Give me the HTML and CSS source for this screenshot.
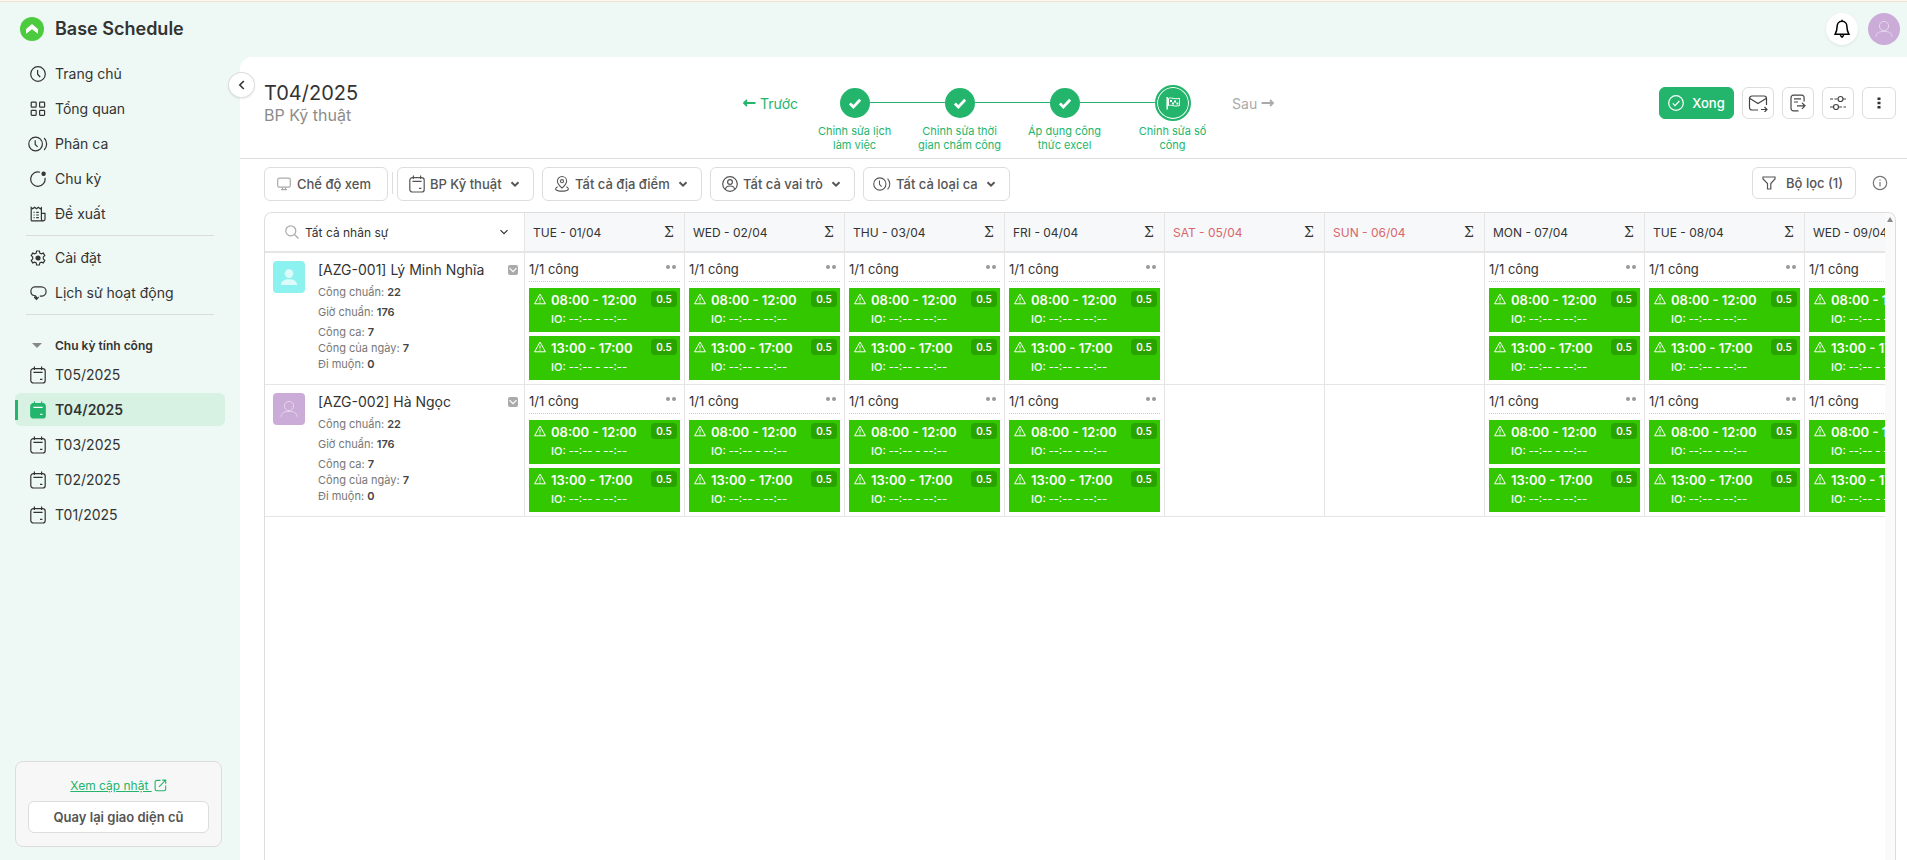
FILE: index.html
```
<!DOCTYPE html>
<html lang="vi">
<head>
    <meta charset="UTF-8">
    <meta name="viewport" content="width=device-width, initial-scale=1.0">
    <title>Base Schedule</title>
    <link rel="stylesheet" href="styles.css">
</head>
<body>
    <!-- Bộ icon dùng chung -->
    <svg class="sprite">
        <symbol id="i-clock" viewBox="0 0 16 16"><circle cx="8" cy="8" r="7.3"/><path d="M7.6 4v4.2l2.6 2.8"/></symbol>
        <symbol id="i-grid" viewBox="0 0 16 16"><rect x="1.2" y="1.2" width="5" height="5" rx=".8"/><rect x="9.6" y="1.2" width="5" height="5" rx=".8"/><rect x="1.2" y="9.4" width="5" height="5" rx=".8"/><rect x="9.6" y="9.4" width="5" height="5" rx=".8"/></symbol>
        <symbol id="i-shift" viewBox="0 0 20 16"><circle cx="7.6" cy="8" r="6.8"/><path d="M7.2 4.2v4.2l2.4 2.4M16.2 2a8.6 8.6 0 0 1 0 12"/></symbol>
        <symbol id="i-cycle" viewBox="0 0 16 16"><path d="M10 1.2A7.2 7.2 0 1 0 15 6.8"/><circle cx="13.6" cy="2.8" r="1.6" fill="currentColor"/></symbol>
        <symbol id="i-request" viewBox="0 0 16 16"><path d="M1.2 14.8V1.5l1.6 1.2 1.8-1.5 1.9 1.5 1.8-1.5 1.9 1.5 1.2-1V13a1.8 1.8 0 0 0 3.6 0V7.4h-3.4M1.2 14.8h11.9M3.6 6.4h1M6.2 6.4h2.6M3.6 9h1M6.2 9h2.6M3.6 11.6h1M6.2 11.6h2.6"/></symbol>
        <symbol id="i-gear" viewBox="0 0 16 16"><path d="M6.6 1h2.8l.4 2 1.5.9 2-.8 1.5 2.5-1.5 1.3v2.2l1.5 1.3-1.5 2.5-2-.8-1.5.9-.4 2H6.6l-.4-2-1.5-.9-2 .8-1.5-2.5 1.5-1.3V6.9L1.2 5.6l1.5-2.5 2 .8 1.5-.9z"/><circle cx="8" cy="8" r="2" fill="currentColor"/></symbol>
        <symbol id="i-history" viewBox="0 0 16 16"><path d="M9.8 11.2h1.6a4.7 4.7 0 0 0 0-9.4H4.8a4.3 4.3 0 0 0-3.9 4.6c0 2.4 1.5 3.8 3.6 4.3 1.4.2 2 .8 2 2.8M4.2 12l2.3 2.3L8.6 12"/></symbol>
        <symbol id="i-calendar" viewBox="0 0 16 18"><rect x=".8" y="2.6" width="14.4" height="14.4" rx="2.6"/><path d="M4.4.6v3.4M11.6.6v3.4M3.4 6.4h9.2M10 13.3h2.4"/></symbol>
        <symbol id="i-calendar-fill" viewBox="0 0 16 18"><rect x=".8" y="2.6" width="14.4" height="14.4" rx="2.6" fill="currentColor"/><path d="M4.4.6v3.4M11.6.6v3.4"/><path d="M3.4 6.4h9.2M10 13.3h2.4" stroke="#fff"/></symbol>
        <symbol id="i-external" viewBox="0 0 14 14"><path d="M7 1.5H3A1.8 1.8 0 0 0 1.2 3.3v7.6A1.8 1.8 0 0 0 3 12.7h7.8a1.8 1.8 0 0 0 1.8-1.8V7M5.4 8.5l7.1-7.2M8.8 1.2h3.8v3.9"/></symbol>
        <symbol id="i-user" viewBox="0 0 32 32"><circle cx="16" cy="13" r="4.6"/><path d="M8 23.6c.3-3.6 2.8-5.2 8-5.2s7.7 1.6 8 5.2"/></symbol>
        <symbol id="i-user-fill" viewBox="0 0 32 32"><circle cx="16" cy="12.6" r="4.3" fill="currentColor" stroke="none"/><path d="M8 24c0-4 3.2-5.8 8-5.8s8 1.8 8 5.8z" fill="currentColor" stroke="none"/></symbol>
        <symbol id="i-check" viewBox="0 0 12 12"><path d="M1.6 6.4l3 3 5.8-6.2"/></symbol>
        <symbol id="i-down" viewBox="0 0 10 10"><path d="M1.5 3.2L5 6.7l3.5-3.5"/></symbol>
        <symbol id="i-monitor" viewBox="0 0 14 14"><rect x=".7" y="1.2" width="12.6" height="9" rx="1.6"/><path d="M4 12.6h6M5.5 10.2v2.2M8.5 10.2v2.2"/></symbol>
        <symbol id="i-pin" viewBox="0 0 18 18"><path d="M9 13.6C5.8 10.6 3.8 8.4 3.8 5.8a5.2 5.2 0 0 1 10.4 0c0 2.6-2 4.8-5.2 7.8z"/><circle cx="9" cy="5.8" r="1.7"/><path d="M4.2 12.2c-4.2 1.8-3 4.8 4.8 4.8s9-3 4.8-4.8"/></symbol>
        <symbol id="i-role" viewBox="0 0 16 16"><circle cx="8" cy="8" r="7.3"/><circle cx="8" cy="6" r="2.4"/><path d="M3.4 13.4c.3-2.6 1.8-3.4 4.6-3.4s4.3.8 4.6 3.4"/></symbol>
        <symbol id="i-warn" viewBox="0 0 12 12"><path d="M6 1L11.4 10.8H.6zM6 4.4v3.2M6 8.6v1.1"/></symbol>
    </svg>

    <header class="topbar">
        <a class="brand" href="#">
            <svg class="logo" viewBox="0 0 24 24"><circle cx="12" cy="12" r="12" fill="#4ccb3f"/><path d="M12 7l5.6 4.8a1 1 0 0 1 .4.8v4.1l-4-2.9L12 12.3l-2 1.5-4 2.9v-4.1a1 1 0 0 1 .4-.8z" fill="#fff"/></svg>
            Base Schedule
        </a>
        <div class="account">
            <button class="bell" aria-label="Thông báo">
                <svg width="18" height="20" viewBox="0 0 18 20"><path d="M9 2.2c-3.4 0-4.9 2.6-4.9 5.4 0 4-1 5.8-2 7.7h13.8c-1-1.9-2-3.7-2-7.7 0-2.8-1.5-5.4-4.9-5.4zM7.2 16.2l1.8 2 1.8-2M9 .8v1.4"/></svg>
            </button>
            <svg class="avatar round"><use href="#i-user"/></svg>
        </div>
    </header>

    <div class="layout">
        <aside class="sidebar">
            <nav>
                <a class="item" href="#"><svg><use href="#i-clock"/></svg>Trang chủ</a>
                <a class="item" href="#"><svg><use href="#i-grid"/></svg>Tổng quan</a>
                <a class="item" href="#"><svg><use href="#i-shift"/></svg>Phân ca</a>
                <a class="item" href="#"><svg><use href="#i-cycle"/></svg>Chu kỳ</a>
                <a class="item" href="#"><svg><use href="#i-request"/></svg>Đề xuất</a>
                <hr>
                <a class="item" href="#"><svg><use href="#i-gear"/></svg>Cài đặt</a>
                <a class="item" href="#"><svg><use href="#i-history"/></svg>Lịch sử hoạt động</a>
                <hr>
                <button class="group"><span class="triangle"></span>Chu kỳ tính công</button>
                <a class="item" href="#"><svg><use href="#i-calendar"/></svg>T05/2025</a>
                <a class="item active" href="#"><svg><use href="#i-calendar-fill"/></svg>T04/2025</a>
                <a class="item" href="#"><svg><use href="#i-calendar"/></svg>T03/2025</a>
                <a class="item" href="#"><svg><use href="#i-calendar"/></svg>T02/2025</a>
                <a class="item" href="#"><svg><use href="#i-calendar"/></svg>T01/2025</a>
            </nav>
            <div class="update-box">
                <a href="#"><u>Xem cập nhật </u><svg width="13" height="13"><use href="#i-external"/></svg></a>
                <button>Quay lại giao diện cũ</button>
            </div>
        </aside>

        <main>
            <button class="collapse" aria-label="Thu gọn">
                <svg width="10" height="10" viewBox="0 0 10 10"><path d="M6.8 1L2.8 5l4 4"/></svg>
            </button>

            <div class="page-head">
                <div class="title">
                    <h1>T04/2025</h1>
                    <p>BP Kỹ thuật</p>
                </div>

                <div class="progress">
                    <button class="step-nav">
                        <svg width="14" height="10" viewBox="0 0 14 10"><path d="M13.5 5H2M5 2L2 5l3 3"/></svg>Trước
                    </button>
                    <ol class="steps">
                        <li><span class="dot"><svg><use href="#i-check"/></svg></span><span class="step-label">Chỉnh sửa lịch làm việc</span></li>
                        <li><span class="dot"><svg><use href="#i-check"/></svg></span><span class="step-label">Chỉnh sửa thời gian chấm công</span></li>
                        <li><span class="dot"><svg><use href="#i-check"/></svg></span><span class="step-label">Áp dụng công thức excel</span></li>
                        <li class="current"><span class="dot"><svg viewBox="0 0 14 14"><path d="M1.2 1v12.5" stroke-width="1.5"/><path d="M2.5 2.4c3-1.4 5 1.2 11 0v7.2c-6 1.4-8-1.2-11 0z"/><path d="M4 4h2v2H4zM8 4.6h2v2H8zM6 6.4h2v2H6zM10.4 6.4h2v2h-2z" fill="#fff" stroke="none"/></svg></span><span class="step-label">Chỉnh sửa số công</span></li>
                    </ol>
                    <button class="step-nav next" disabled>
                        Sau<svg width="14" height="10" viewBox="0 0 14 10"><path d="M.5 5H12M9 2l3 3-3 3"/></svg>
                    </button>
                </div>

                <div class="actions">
                    <button class="done">
                        <svg width="16" height="16" viewBox="0 0 16 16"><circle cx="8" cy="8" r="7.3"/><path d="M4.8 8.4l2.2 2.2 4.4-4.6"/></svg>Xong
                    </button>
                    <button class="icon-btn" aria-label="Gửi thư">
                        <svg width="20" height="18" viewBox="0 0 20 18"><path d="M10 16H4a2.5 2.5 0 0 1-2.5-2.5v-9A2.5 2.5 0 0 1 4 2h12a2.5 2.5 0 0 1 2.5 2.5V11M2 4.5l8 5 8-5M13 15.5h6M16.5 13l2.5 2.5-2.5 2.5"/></svg>
                    </button>
                    <button class="icon-btn" aria-label="Xuất dữ liệu">
                        <svg width="18" height="18" viewBox="0 0 18 18"><path d="M9.5 16.8H4.5A2.5 2.5 0 0 1 2 14.3V3.7a2.5 2.5 0 0 1 2.5-2.5h8.3a2.3 2.3 0 0 1 2.3 2.3V7.5M5 4.8h7M5 8h4M8 11.8h8M13 8.8l3 3-3 3"/></svg>
                    </button>
                    <button class="icon-btn" aria-label="Tùy chỉnh">
                        <svg width="18" height="18" viewBox="0 0 18 18"><path d="M1 5h3M5.5 5h3M14 5h3M1 13h3.5M10 13h3M14.5 13h2.5"/><circle cx="11.5" cy="5" r="2.5"/><circle cx="7" cy="13" r="2.5"/></svg>
                    </button>
                    <button class="icon-btn more" aria-label="Thêm">
                        <svg width="4" height="12" viewBox="0 0 4 12"><path d="M.5 .5h3v2.5h-3zM.5 4.7h3v2.5h-3zM.5 9h3v2.5h-3z" fill="#333" stroke="none"/></svg>
                    </button>
                </div>
            </div>

            <div class="toolbar">
                <button class="view-mode"><svg width="14" height="14"><use href="#i-monitor"/></svg>Chế độ xem</button>
                <span class="divider"></span>
                <label class="filter"><svg width="16" height="18"><use href="#i-calendar"/></svg>
                    <select aria-label="Bộ phận"><option>BP Kỹ thuật</option></select>
                    <svg class="arrow"><use href="#i-down"/></svg></label>
                <label class="filter"><svg width="16" height="18"><use href="#i-pin"/></svg>
                    <select aria-label="Địa điểm"><option>Tất cả địa điểm</option></select>
                    <svg class="arrow"><use href="#i-down"/></svg></label>
                <label class="filter"><svg width="16" height="16"><use href="#i-role"/></svg>
                    <select aria-label="Vai trò"><option>Tất cả vai trò</option></select>
                    <svg class="arrow"><use href="#i-down"/></svg></label>
                <label class="filter shift"><svg width="18" height="16"><use href="#i-shift"/></svg>
                    <select aria-label="Loại ca"><option>Tất cả loại ca</option></select>
                    <svg class="arrow"><use href="#i-down"/></svg></label>
                <button class="filter-count">
                    <svg width="14" height="14" viewBox="0 0 14 14"><path d="M1 1h12v2L8.8 7.6V13H5.5V7.6L1 3z"/></svg>Bộ lọc (1)
                </button>
                <button class="info" aria-label="Thông tin">
                    <svg width="16" height="16" viewBox="0 0 16 16"><circle cx="8" cy="8" r="6.7"/><path d="M8 7v4.5M8 4.4v1.3"/></svg>
                </button>
            </div>

            <div class="board">
                <div class="board-scroll">
                    <table>
                        <thead>
                            <tr id="days">
                                <th class="person-col">
                                    <label class="search">
                                        <svg width="14" height="14" viewBox="0 0 14 14"><circle cx="5.8" cy="5.8" r="5"/><path d="M9.5 9.5l4 4"/></svg>
                                        <select aria-label="Nhân sự"><option>Tất cả nhân sự</option></select>
                                        <svg class="arrow"><use href="#i-down"/></svg>
                                    </label>
                                </th>
                            </tr>
                        </thead>
                        <tbody id="people"></tbody>
                    </table>
                </div>
                <div class="gutter"><span></span></div>
            </div>
        </main>
    </div>

    <script>
        const days = [
            'TUE - 01/04', 'WED - 02/04', 'THU - 03/04', 'FRI - 04/04', 'SAT - 05/04',
            'SUN - 06/04', 'MON - 07/04', 'TUE - 08/04', 'WED - 09/04'
        ];
        const shifts = ['08:00 - 12:00', '13:00 - 17:00'];
        const people = [
            { name: '[AZG-001] Lý Minh Nghĩa', color: 'cyan', icon: 'i-user-fill' },
            { name: '[AZG-002] Hà Ngọc', color: '', icon: 'i-user' }
        ];

        const isWeekend = day => /^(SAT|SUN)/.test(day);

        // Hàng tiêu đề
        document.getElementById('days').innerHTML += days.map(day => `
            <th class="${isWeekend(day) ? 'weekend' : ''}">
                <div class="day">${day}<span class="sum">Σ</span></div>
            </th>`).join('');

        // Thẻ ca làm việc
        const shiftCard = time => `
            <div class="card">
                <svg><use href="#i-warn"/></svg>
                <div><b>${time}</b><p>IO: --:-- - --:--</p></div>
                <span class="badge">0.5</span>
            </div>`;

        const dayCell = day => isWeekend(day) ? '<td></td>' : `
            <td>
                <div class="total">1/1 công<span class="dots"><i></i><i></i></span></div>
                ${shifts.map(shiftCard).join('')}
            </td>`;

        document.getElementById('people').innerHTML = people.map(p => `
            <tr>
                <td class="person-col">
                    <div class="person">
                        <svg class="avatar ${p.color}"><use href="#${p.icon}"/></svg>
                        <div class="person-info">
                            <h2>${p.name}<span class="caret"><svg><use href="#i-down"/></svg></span></h2>
                            <p class="wide">Công chuẩn: <b>22</b></p>
                            <p class="wide">Giờ chuẩn: <b>176</b></p>
                            <p>Công ca: <b>7</b></p>
                            <p>Công của ngày: <b>7</b></p>
                            <p>Đi muộn: <b>0</b></p>
                        </div>
                    </div>
                </td>
                ${days.map(dayCell).join('')}
            </tr>`).join('');
    </script>
</body>
</html>
```
FILE: styles.css
```
* {
    box-sizing: border-box;
}
body {
    margin: 0;
    height: 100vh;
    display: flex;
    flex-direction: column;
    overflow: hidden;
    border-top: 1px solid #fef9f0;
    background-color: #eef8f4;
    font-family: Inter, "Noto Sans", sans-serif;
    font-size: 14px;
    color: #333;
}
h1, h2, p, ol {
    margin: 0;
    padding: 0;
    font-weight: 400;
}
a {
    color: inherit;
    text-decoration: none;
}
button, select {
    font-family: inherit;
    font-size: 13px;
    color: inherit;
    cursor: pointer;
}
button {
    display: flex;
    align-items: center;
    justify-content: center;
    padding: 0;
    border: 1px solid #ddd;
    border-radius: 6px;
    background-color: #fff;
}
select {
    appearance: none;
    padding: 0;
    border: none;
    background: none;
    outline: none;
}
svg {
    flex: none;
    fill: none;
    stroke: currentColor;
    stroke-width: 1.2;
}
.sprite {
    display: none;
}

/* Thanh trên cùng */
.topbar {
    display: flex;
    align-items: center;
    justify-content: space-between;
    height: 56px;
    padding: 0 7px 2px 20px;
    border-top: 1px solid #f3e2cf;
}
.brand {
    display: flex;
    align-items: center;
    gap: 11px;
    font-size: 18px;
    font-weight: 600;
}
.logo {
    width: 24px;
    height: 24px;
    stroke: none;
}
.account {
    display: flex;
    gap: 10px;
}
.bell {
    width: 32px;
    height: 32px;
    border: none;
    border-radius: 50%;
    color: #000;
    box-shadow: 0 1px 3px rgba(0, 0, 0, 0.08);
}
.bell svg {
    stroke-width: 1.5;
}
.avatar {
    width: 32px;
    height: 32px;
    border-radius: 4px;
    background-color: #cbacd9;
    color: #e6d6ec;
    stroke-width: 1;
}
.avatar.round {
    border-radius: 50%;
}
.avatar.cyan {
    background-color: #8cf2ef;
    color: #dcfbfa;
}

/* Menu bên trái */
.layout {
    display: flex;
    flex: 1;
    min-height: 0;
}
.sidebar {
    display: flex;
    flex-direction: column;
    justify-content: space-between;
    flex: none;
    width: 240px;
    padding: 0 15px 13px;
}
.item {
    display: flex;
    align-items: center;
    gap: 7px;
    height: 33px;
    margin-bottom: 2px;
    padding-left: 13px;
    border-radius: 6px;
}
.item svg {
    width: 20px;
    height: 16px;
}
.group ~ .item svg {
    height: 18px;
}
.item.active {
    position: relative;
    background-color: #d7f1e3;
    font-weight: 600;
}
.item.active svg {
    color: #24b56d;
}
.item.active::before {
    content: "";
    position: absolute;
    left: 0;
    width: 3px;
    height: 20px;
    background-color: #24b56d;
}
.sidebar hr {
    height: 1px;
    margin: 5px 11px;
    border: none;
    background-color: #d9dcdb;
}
.group {
    gap: 13px;
    height: 26px;
    margin: 17px 0 0 17px;
    border: none;
    background: none;
    font-size: 12px;
    font-weight: 600;
}
.triangle {
    border: 5px solid transparent;
    border-top-color: #888;
    border-bottom: none;
}
.update-box {
    display: flex;
    flex-direction: column;
    align-items: center;
    gap: 6px;
    width: 207px;
    padding: 13px 12px;
    border: 1px solid #ddd;
    border-radius: 8px;
    background-color: #f7f7f7;
}
.update-box a {
    display: flex;
    align-items: center;
    height: 20px;
    gap: 2px;
    font-size: 12px;
    color: #24b56d;
}
.update-box u {
    white-space: pre;
}
.update-box button {
    width: 100%;
    height: 32px;
    font-weight: 600;
    color: #555;
}

/* Nội dung chính */
main {
    position: relative;
    display: flex;
    flex-direction: column;
    flex: 1;
    min-width: 0;
    border-top-left-radius: 12px;
    background-color: #fff;
}
.collapse {
    position: absolute;
    top: 15px;
    left: -12px;
    width: 27px;
    height: 26px;
    border-radius: 50%;
    box-shadow: 0 1px 2px rgba(0, 0, 0, 0.08);
}
.collapse svg {
    stroke-width: 1.6;
}
.page-head {
    display: flex;
    justify-content: space-between;
    height: 102px;
    padding: 24px 11px 0 24px;
    border-bottom: 1px solid #ddd;
}
.title h1 {
    font-size: 20px;
    line-height: 24px;
}
.title p {
    font-size: 16px;
    line-height: 20px;
    color: #8c8c8c;
}
.progress {
    display: flex;
    align-items: flex-start;
    gap: 4px;
    padding-top: 4px;
}
.step-nav {
    gap: 4px;
    height: 36px;
    border: none;
    background: none;
    font-size: 14px;
    color: #24b56d;
}
.step-nav svg {
    stroke-width: 1.8;
}
.step-nav.next {
    color: #aaa;
}
.steps {
    display: flex;
    list-style: none;
}
.steps li {
    display: flex;
    flex-direction: column;
    align-items: center;
    gap: 3px;
    width: 105px;
    position: relative;
}
.steps .current {
    width: 111px;
}
.steps li + li::before {
    content: "";
    position: absolute;
    top: 17px;
    left: -37px;
    width: 75px;
    height: 1px;
    background-color: #24b56d;
}
.dot {
    display: flex;
    align-items: center;
    justify-content: center;
    width: 30px;
    height: 30px;
    margin: 3px 0;
    border-radius: 50%;
    background-color: #24b56d;
    color: #fff;
    z-index: 1;
}
.dot svg {
    width: 14px;
    height: 14px;
    stroke-width: 2.4;
}
.current .dot {
    width: 36px;
    height: 36px;
    margin: 0;
    border: 2px solid #24b56d;
    box-shadow: inset 0 0 0 1px #fff;
}
.current .dot svg {
    stroke-width: 1;
}
.step-label {
    width: 86px;
    font-size: 11px;
    line-height: 14px;
    text-align: center;
    color: #24b56d;
}
.actions {
    display: flex;
    justify-content: flex-end;
    gap: 8px;
    padding-top: 6px;
}
.icon-btn {
    width: 32px;
    height: 32px;
    color: #444;
}
.more {
    width: 34px;
}
.done {
    gap: 8px;
    width: 75px;
    height: 32px;
    border-color: #24b56d;
    background-color: #24b56d;
    font-weight: 500;
    color: #fff;
}

/* Bộ lọc */
.toolbar {
    display: flex;
    gap: 8px;
    height: 53px;
    padding: 8px 11px 0 24px;
}
.toolbar button, .filter {
    height: 34px;
    color: #555;
    font-weight: 500;
}
.toolbar .view-mode {
    gap: 6px;
    padding: 0 16px 0 12px;
}
.view-mode svg {
    color: #aaa;
}
.divider {
    width: 1px;
    height: 22px;
    margin: 5px -4px 0;
    background-color: #ddd;
}
.filter {
    display: flex;
    align-items: center;
    gap: 5px;
    padding: 0 13px 0 11px;
    border: 1px solid #ddd;
    border-radius: 6px;
}
.filter.shift {
    padding-left: 9px;
}
.filter select {
    font-weight: 500;
}
.arrow {
    width: 10px;
    height: 10px;
    pointer-events: none;
}
.filter .arrow {
    margin-left: 3px;
    stroke-width: 2;
}
.toolbar .filter-count {
    gap: 10px;
    height: 32px;
    margin-left: auto;
    padding: 0 12px 0 9px;
}
.toolbar .info {
    width: 32px;
    height: 32px;
    border: none;
    color: #777;
}

/* Bảng công */
.board {
    display: flex;
    flex: 1;
    min-height: 0;
    margin: 0 11px 0 24px;
    border: 1px solid #ddd;
    border-bottom: none;
    border-radius: 8px 8px 0 0;
    overflow: hidden;
}
.board-scroll {
    flex: 1;
    overflow: hidden;
}
.gutter {
    width: 10px;
    padding: 4px 2px;
    background-color: #fafafa;
}
.gutter span {
    display: block;
    border: 3px solid transparent;
    border-bottom: 5px solid #888;
    border-top: none;
}
table {
    table-layout: fixed;
    width: 1700px;
    border-collapse: separate;
    border-spacing: 0;
}
th, td {
    width: 160px;
    padding: 0;
    border-right: 1px solid #e5e5e5;
    vertical-align: top;
}
th {
    height: 40px;
    border-bottom: 2px solid #e5e5e5;
    background-color: #f7f8fa;
    font-size: 12px;
    font-weight: 400;
}
td {
    height: 132px;
    padding: 4px 4px 3px;
    border-bottom: 1px solid #e5e5e5;
}
.person-col {
    width: 260px;
    background-color: #fff;
}
.search {
    display: flex;
    align-items: center;
    gap: 6px;
    height: 38px;
    padding: 0 15px 0 20px;
}
.search select {
    flex: 1;
    font-size: 12px;
}
.search svg:first-child {
    color: #aaa;
}
.day {
    display: flex;
    align-items: center;
    justify-content: space-between;
    height: 38px;
    padding: 0 10px 0 8px;
}
.weekend {
    color: #d9666a;
}
.sum {
    font-family: "DejaVu Serif", serif;
    font-size: 14px;
    color: #333;
}
.person {
    display: flex;
    gap: 13px;
    padding: 4px 2px 4px 4px;
}
.person-info {
    flex: 1;
    font-size: 11px;
    line-height: 16px;
    color: #777;
}
.person-info h2 {
    display: flex;
    align-items: center;
    justify-content: space-between;
    height: 18px;
    margin-bottom: 5px;
    font-size: 14px;
    color: #333;
}
.person-info b {
    font-weight: 600;
    color: #444;
}
.wide {
    margin-bottom: 4px;
}
.caret {
    display: flex;
    width: 10px;
    height: 10px;
    border-radius: 2px;
    background-color: #aaa;
    color: #fff;
}
.caret svg {
    width: 10px;
    height: 10px;
}
.total {
    display: flex;
    justify-content: space-between;
    height: 25px;
    margin-bottom: 6px;
    border-bottom: 1px dotted #ccc;
    font-size: 13px;
    line-height: 25px;
}
.dots {
    display: flex;
    gap: 2px;
    padding: 8px 4px 0 0;
}
.dots i {
    width: 4px;
    height: 4px;
    border-radius: 50%;
    background-color: #999;
}
.card {
    display: flex;
    gap: 5px;
    height: 44px;
    padding: 3px 3px 0 5px;
    background-color: #33c700;
    color: #fff;
}
.card + .card {
    margin-top: 4px;
}
.card svg {
    width: 12px;
    height: 12px;
    margin-top: 2px;
    stroke-width: 1;
}
.card b {
    display: block;
    font-size: 13px;
    font-weight: 600;
    line-height: 18px;
}
.card p {
    font-size: 11px;
    font-weight: 500;
    line-height: 20px;
}
.badge {
    width: 26px;
    height: 16px;
    margin-left: auto;
    border-radius: 4px;
    background-color: #29a300;
    font-size: 10px;
    font-weight: 600;
    line-height: 16px;
    text-align: center;
}
```
